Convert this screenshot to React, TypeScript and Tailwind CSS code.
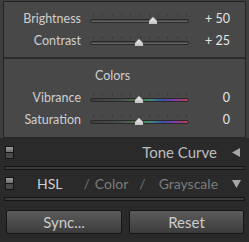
import React from "react"

const font = { fontFamily: "Lato, 'Open Sans', sans-serif" }

function Slider({ pos, color }: { pos: number; color?: boolean }) {
  const ticks = Array.from({ length: 11 }, (_, i) => i)
  return (
    <div className="relative w-[99px] h-[14px]">
      {ticks.map((i) => (
        <div
          key={i}
          className="absolute top-[2px] w-px h-[3px] bg-[#3a3a3a]"
          style={{ left: 3 + i * 9.3 }}
        />
      ))}
      <div
        className={
          color
            ? "absolute left-0 right-0 top-[7px] h-[4px] rounded-full border border-[#2a2a2a] bg-[linear-gradient(to_right,#3c3c3c_0%,#4a4f4a_30%,#4f7a52_50%,#3f8a78_62%,#3a4fb0_74%,#7a3fa8_86%,#c03a4a_100%)]"
            : "absolute left-0 right-0 top-[7px] h-[4px] rounded-full border border-[#2a2a2a] bg-gradient-to-b from-[#3a3a3a] to-[#777777]"
        }
      />
      <svg
        className="absolute top-[4px]"
        style={{ left: pos - 5 }}
        width="10"
        height="9"
        viewBox="0 0 10 9"
      >
        <defs>
          <linearGradient id="th" x1="0" y1="0" x2="0" y2="1">
            <stop offset="0" stopColor="#f4f4f4" />
            <stop offset="1" stopColor="#bdbdbd" />
          </linearGradient>
        </defs>
        <polygon points="5,0.5 9.5,5 9.5,8.5 0.5,8.5 0.5,5" fill="url(#th)" stroke="#3a3a3a" strokeWidth="0.8" />
      </svg>
    </div>
  )
}

function Row({ label, value, pos, color }: { label: string; value: string; pos: number; color?: boolean }) {
  return (
    <div className="flex items-center h-[22px]">
      <div className="w-[77px] text-right text-[12.5px] text-[#cfcfcf] leading-none">{label}</div>
      <div className="ml-[9px]">
        <Slider pos={pos} color={color} />
      </div>
      <div className="w-[41px] text-right text-[12.5px] text-[#e4e4e4] leading-none">{value}</div>
    </div>
  )
}

function Toggle() {
  return (
    <div className="w-[9px] h-[13px] border border-[#151515] flex flex-col shrink-0">
      <div className="h-[6px] bg-gradient-to-b from-[#9a9a9a] to-[#6e6e6e] border-b border-[#151515]" />
      <div className="flex-1 bg-[#4a4a4a]" />
    </div>
  )
}

function Groove() {
  return (
    <div className="mx-[4px] h-[4px] border-t border-b border-x border-[#141414] bg-[#3c3c3c]" />
  )
}

export default function App() {
  return (
    <div className="w-[249px] h-[242px] bg-[#2a2a2a] overflow-hidden flex flex-col" style={font}>
      <div className="h-[138px] bg-[#3e3e3e] px-[3px] pt-px">
        <div className="h-[137px] border border-[#222222] bg-[#484848] flex flex-col">
          <div className="mt-[6px]">
            <Row label="Brightness" value="+ 50" pos={63} />
            <Row label="Contrast" value="+ 25" pos={49} />
          </div>
          <div className="mt-[5px] h-[2px] bg-[#2c2c2c]" />
          <div className="mt-[9px] h-[16px] flex items-center pl-[91px] text-[12.5px] text-[#cfcfcf] leading-none">
            Colors
          </div>
          <div className="mt-[3px]">
            <Row label="Vibrance" value="0" pos={49} color />
            <Row label="Saturation" value="0" pos={49} color />
          </div>
        </div>
      </div>

      <div className="h-[28px] flex items-center pl-[5px] pr-[9px]">
        <Toggle />
        <div className="flex-1 text-right text-[15px] text-[#bdbdbd] leading-none pr-[15px]">Tone Curve</div>
        <svg width="8" height="9" viewBox="0 0 8 9">
          <polygon points="8,0 8,9 0,4.5" fill="#a8a8a8" />
        </svg>
      </div>
      <Groove />

      <div className="h-[27px] flex items-center pl-[5px] pr-[8px]">
        <Toggle />
        <div className="flex-1 flex items-center text-[14px] leading-none pl-[23px]">
          <span className="text-[#cfcfcf]">HSL</span>
          <span className="text-[#6f6f6f] ml-[21px]">/</span>
          <span className="text-[#7c7c7c] ml-[5px]">Color</span>
          <span className="text-[#6f6f6f] ml-[11px]">/</span>
          <span className="text-[#7c7c7c] ml-[13px]">Grayscale</span>
        </div>
        <svg width="9" height="8" viewBox="0 0 9 8">
          <polygon points="0,0 9,0 4.5,8" fill="#a8a8a8" />
        </svg>
      </div>
      <Groove />

      <div className="flex gap-[7px] pl-[6px] pr-[5px] mt-[9px]">
        <button className="w-[116px] h-[24px] border border-[#161616] rounded-[2px] bg-gradient-to-b from-[#5c5c5c] to-[#3c3c3c] text-[15px] text-[#cccccc] leading-none">
          Sync...
        </button>
        <button className="w-[115px] h-[24px] border border-[#161616] rounded-[2px] bg-gradient-to-b from-[#5c5c5c] to-[#3c3c3c] text-[15px] text-[#cccccc] leading-none">
          Reset
        </button>
      </div>
    </div>
  )
}
